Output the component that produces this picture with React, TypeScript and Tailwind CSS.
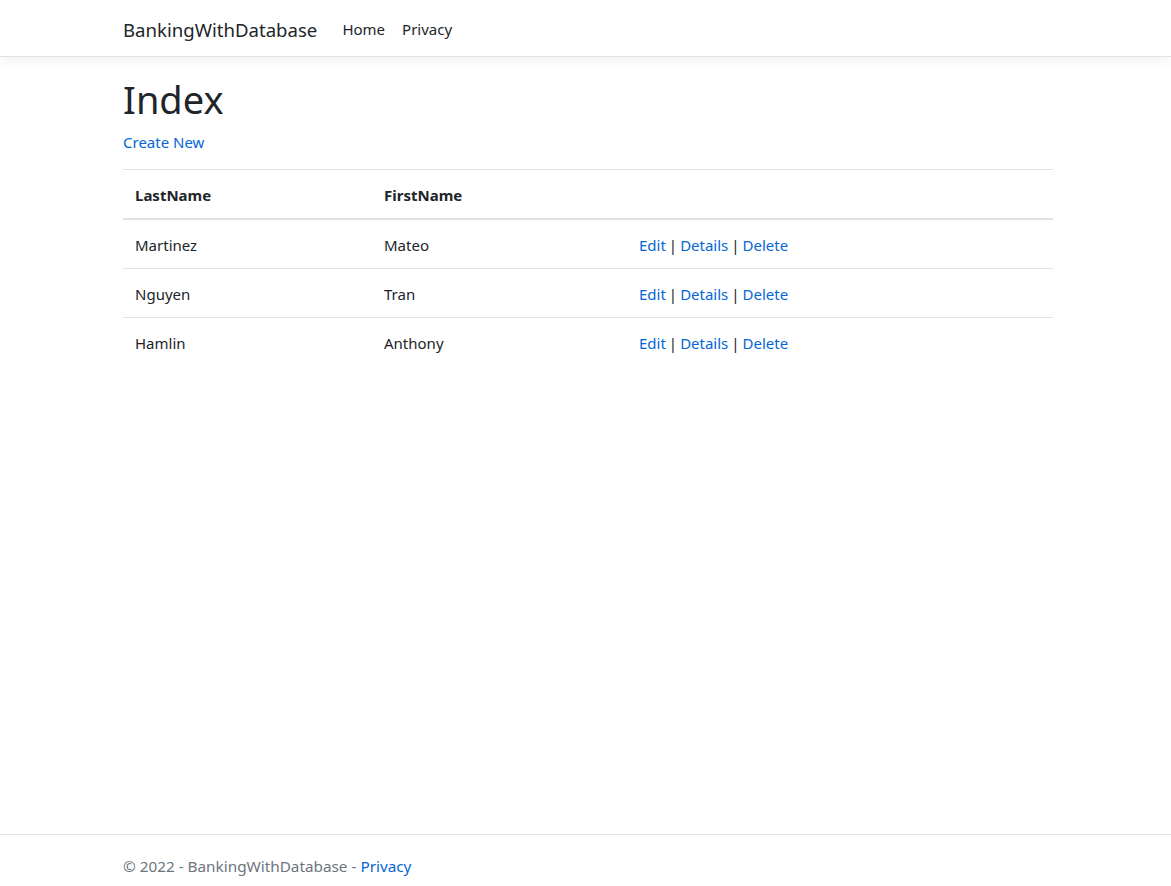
const rows = [
  { last: 'Martinez', first: 'Mateo' },
  { last: 'Nguyen', first: 'Tran' },
  { last: 'Hamlin', first: 'Anthony' },
];

function Actions() {
  return (
    <span className="whitespace-nowrap">
      <a href="#" className="text-[#0366d6]">Edit</a>
      <span className="mx-[3px]">|</span>
      <a href="#" className="text-[#0366d6]">Details</a>
      <span className="mx-[3px]">|</span>
      <a href="#" className="text-[#0366d6]">Delete</a>
    </span>
  );
}

export default function App() {
  return (
    <div
      className="flex min-h-[886px] flex-col bg-white text-[15px] text-[#212529]"
      style={{ fontFamily: '"Noto Sans", "Open Sans", sans-serif' }}
    >
      <header className="h-[57px] border-b border-[#dee2e6] bg-white shadow-[0_4px_12px_rgba(0,0,0,0.05)]">
        <nav className="ml-[123px] flex h-[56px] w-[930px] items-center pt-[3px]">
          <a href="#" className="mr-[25px] text-[18.6px] text-[#212529]">
            BankingWithDatabase
          </a>
          <a href="#" className="mr-[17px] text-[15px] text-[#212529]">
            Home
          </a>
          <a href="#" className="text-[15px] text-[#212529]">
            Privacy
          </a>
        </nav>
      </header>

      <main className="ml-[123px] w-[930px] flex-1">
        <h1 className="mt-[18px] text-[38px] leading-[48px] font-normal">Index</h1>
        <p className="mt-[7px] leading-[24px]">
          <a href="#" className="text-[#0366d6]">Create New</a>
        </p>
        <table className="mt-[15px] w-full border-t border-[#dee2e6] text-left">
          <thead>
            <tr className="border-b-2 border-[#dee2e6]">
              <th className="w-[249px] px-[12px] pt-[13px] pb-[11px] leading-[24px] font-bold">
                LastName
              </th>
              <th className="w-[255px] px-[12px] pt-[13px] pb-[11px] leading-[24px] font-bold">
                FirstName
              </th>
              <th className="px-[12px]"></th>
            </tr>
          </thead>
          <tbody>
            {rows.map((r, i) => (
              <tr
                key={r.last}
                className={i < rows.length - 1 ? 'border-b border-[#dee2e6]' : ''}
              >
                <td className="px-[12px] pt-[13px] pb-[11px] leading-[24px]">{r.last}</td>
                <td className="px-[12px] pt-[13px] pb-[11px] leading-[24px]">{r.first}</td>
                <td className="px-[12px] pt-[13px] pb-[11px] leading-[24px]">
                  <Actions />
                </td>
              </tr>
            ))}
          </tbody>
        </table>
      </main>

      <footer className="h-[52px] border-t border-[#dee2e6]">
        <div className="ml-[123px] w-[930px] pt-[19px] text-[15.3px] leading-[24px] text-[#6c757d]">
          © 2022 - BankingWithDatabase -{' '}
          <a href="#" className="text-[#0366d6]">Privacy</a>
        </div>
      </footer>
    </div>
  );
}
